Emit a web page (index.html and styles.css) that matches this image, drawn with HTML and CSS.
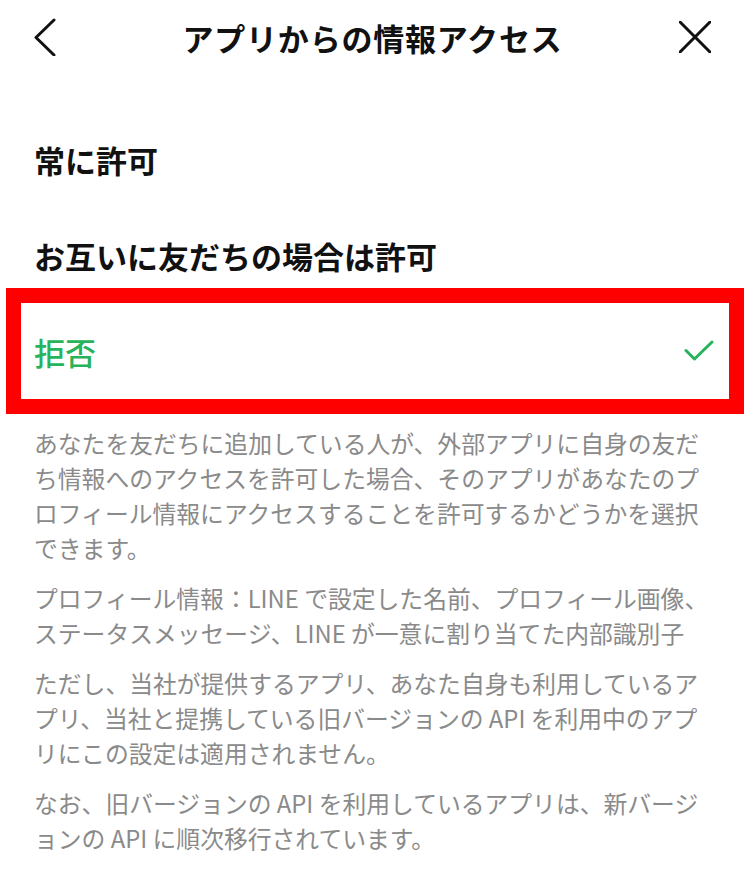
FILE: index.html
```html
<!DOCTYPE html>
<html lang="ja">
<head>
    <meta charset="UTF-8">
    <meta name="viewport" content="width=device-width, initial-scale=1.0">
    <title>アプリからの情報アクセス</title>
    <link rel="stylesheet" href="styles.css">
</head>
<body>

<header class="topbar">
    <a class="back" href="#">
        <svg width="22" height="38" viewBox="0 0 22 38">
            <polyline points="20,2 2,19.5 20,37" fill="none" stroke="#111" stroke-width="3" stroke-linecap="round" stroke-linejoin="round"/>
        </svg>
    </a>
    <h1 class="title">アプリからの情報アクセス</h1>
    <a class="close" href="#">
        <svg width="32" height="32" viewBox="0 0 32 32">
            <line x1="1" y1="1" x2="31" y2="31" stroke="#111" stroke-width="3" stroke-linecap="round"/>
            <line x1="31" y1="1" x2="1" y2="31" stroke="#111" stroke-width="3" stroke-linecap="round"/>
        </svg>
    </a>
</header>

<ul class="options">
    <li class="option">常に許可</li>
    <li class="option">お互いに友だちの場合は許可</li>
    <li class="option selected">
        <span>拒否</span>
        <svg class="check" width="30" height="22" viewBox="0 0 30 22">
            <polyline points="2,10.5 10.5,19 28,2" fill="none" stroke="#27b35b" stroke-width="3" stroke-linecap="round" stroke-linejoin="round"/>
        </svg>
    </li>
</ul>

<div class="notes">
    <p>あなたを友だちに追加している人が、外部アプリに自身の友だ<br>ち情報へのアクセスを許可した場合、そのアプリがあなたのプ<br>ロフィール情報にアクセスすることを許可するかどうかを選択<br>できます。</p>
    <p>プロフィール情報：LINE で設定した名前、プロフィール画像、<br>ステータスメッセージ、LINE が一意に割り当てた内部識別子</p>
    <p>ただし、当社が提供するアプリ、あなた自身も利用しているア<br>プリ、当社と提携している旧バージョンの API を利用中のアプ<br>リにこの設定は適用されません。</p>
    <p>なお、旧バージョンの API を利用しているアプリは、新バージ<br>ョンの API に順次移行されています。</p>
</div>

</body>
</html>
```

FILE: styles.css
```css
body {
    margin: 0;
    background-color: #ffffff;
    font-family: "Noto Sans CJK JP", "Noto Sans", sans-serif;
    color: #111111;
}

/* top bar */
.topbar {
    display: grid;
    grid-template-columns: 1fr auto 1fr;
    align-items: center;
    height: 74px;
    padding: 0 39px 0 34px;
}
.topbar a {
    display: flex;
}
.back {
    justify-self: start;
}
.close {
    justify-self: end;
}
.title {
    margin: 0;
    font-size: 31px;
    font-weight: 700;
    letter-spacing: 0.8px;
}

/* options */
.options {
    list-style: none;
    margin: 37px 0 0 0;
    padding: 0;
}
.option {
    display: flex;
    align-items: center;
    justify-content: space-between;
    height: 96px;
    margin: 0 21px;
    padding: 0 15px 0 13px;
    font-size: 31px;
    font-weight: 700;
}
.option.selected {
    color: #27b35b;
    font-weight: 500;
    outline: 15px solid #ff0000;
}

/* explanation text */
.notes {
    padding: 26px 14px 0 34px;
    color: #8a8a8a;
    font-size: 23.8px;
    line-height: 35px;
}
.notes p {
    margin: 0 0 15px 0;
}
```
